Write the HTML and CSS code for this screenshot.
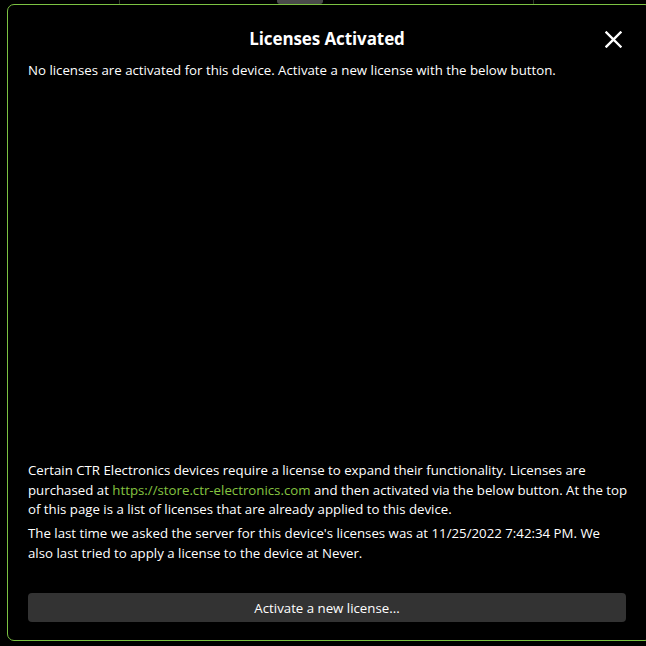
FILE: index.html
```html
<!DOCTYPE html>
<html>
<head>
<meta charset="utf-8">
<link rel="stylesheet" href="styles.css">
</head>
<body>
<div class="backdrop">
  <div class="strip">
    <span class="vline vl1"></span>
    <span class="pill"></span>
    <span class="vline vl2"></span>
  </div>
  <div class="dialog">
    <div class="header">
      <h1 class="title">Licenses Activated</h1>
      <button class="close" aria-label="Close">
        <svg width="17" height="17" viewBox="0 0 17 17"><path d="M1.5 1.5 L15.5 15.5 M15.5 1.5 L1.5 15.5" stroke="#fff" stroke-width="2.4" stroke-linecap="square"/></svg>
      </button>
    </div>
    <p class="status">No licenses are activated for this device. Activate a new license with the below button.</p>
    <div class="spacer"></div>
    <p class="info">Certain CTR Electronics devices require a license to expand their functionality. Licenses are purchased at <a class="link" href="#">https://store.ctr-electronics.com</a> and then activated via the below button. At the top of this page is a list of licenses that are already applied to this device.</p>
    <p class="info second">The last time we asked the server for this device's licenses was at 11/25/2022 7:42:34 PM. We also last tried to apply a license to the device at Never.</p>
    <button class="activate">Activate a new license...</button>
  </div>
</div>
</body>
</html>
```

FILE: styles.css
```css
html, body {
  margin: 0;
  padding: 0;
  background: #000;
}
body {
  width: 646px;
  height: 646px;
  overflow: hidden;
  font-family: "Open Sans", "Noto Sans", sans-serif;
  color: #fff;
}
.backdrop {
  display: flex;
  flex-direction: column;
  height: 646px;
}
.strip {
  height: 4px;
  position: relative;
  flex: none;
}
.vline {
  position: absolute;
  top: 0;
  width: 1px;
  height: 4px;
  background: #2e3a25;
}
.vl1 { left: 119px; }
.vl2 { left: 533px; }
.pill {
  position: absolute;
  left: 277px;
  top: 0;
  width: 46px;
  height: 4px;
  background: #4a4a4a;
  border-radius: 0 0 3px 3px;
}
.dialog {
  margin-left: 7px;
  width: 645px;
  height: 637px;
  box-sizing: border-box;
  border: 1px solid #7cc242;
  border-radius: 7px;
  display: flex;
  flex-direction: column;
  padding: 0 0 0 20px;
}
.header {
  display: flex;
  align-items: center;
  justify-content: center;
  position: relative;
  height: 45px;
  margin-top: 11px;
  width: 598px;
}
.title {
  margin: 0;
  font-size: 17px;
  font-weight: 700;
  letter-spacing: -0.1px;
}
.close {
  position: absolute;
  right: 4px;
  top: 15px;
  background: none;
  border: 0;
  padding: 0;
  width: 17px;
  height: 17px;
  display: block;
}
.close svg { display: block; }
.status {
  margin: 0;
  font-size: 13.25px;
  line-height: 19px;
  width: 600px;
}
.spacer { flex: 1; }
.info {
  margin: 0;
  font-size: 13.25px;
  line-height: 19.5px;
  width: 600px;
}
.second { margin-top: 4.5px; }
.link {
  color: #86c440;
  text-decoration: none;
}
.activate {
  margin: 30px 0 18px;
  width: 598px;
  height: 29px;
  background: #333;
  border: 0;
  border-radius: 4px;
  color: #fff;
  font-family: inherit;
  font-size: 13.25px;
  padding: 0;
}
```
